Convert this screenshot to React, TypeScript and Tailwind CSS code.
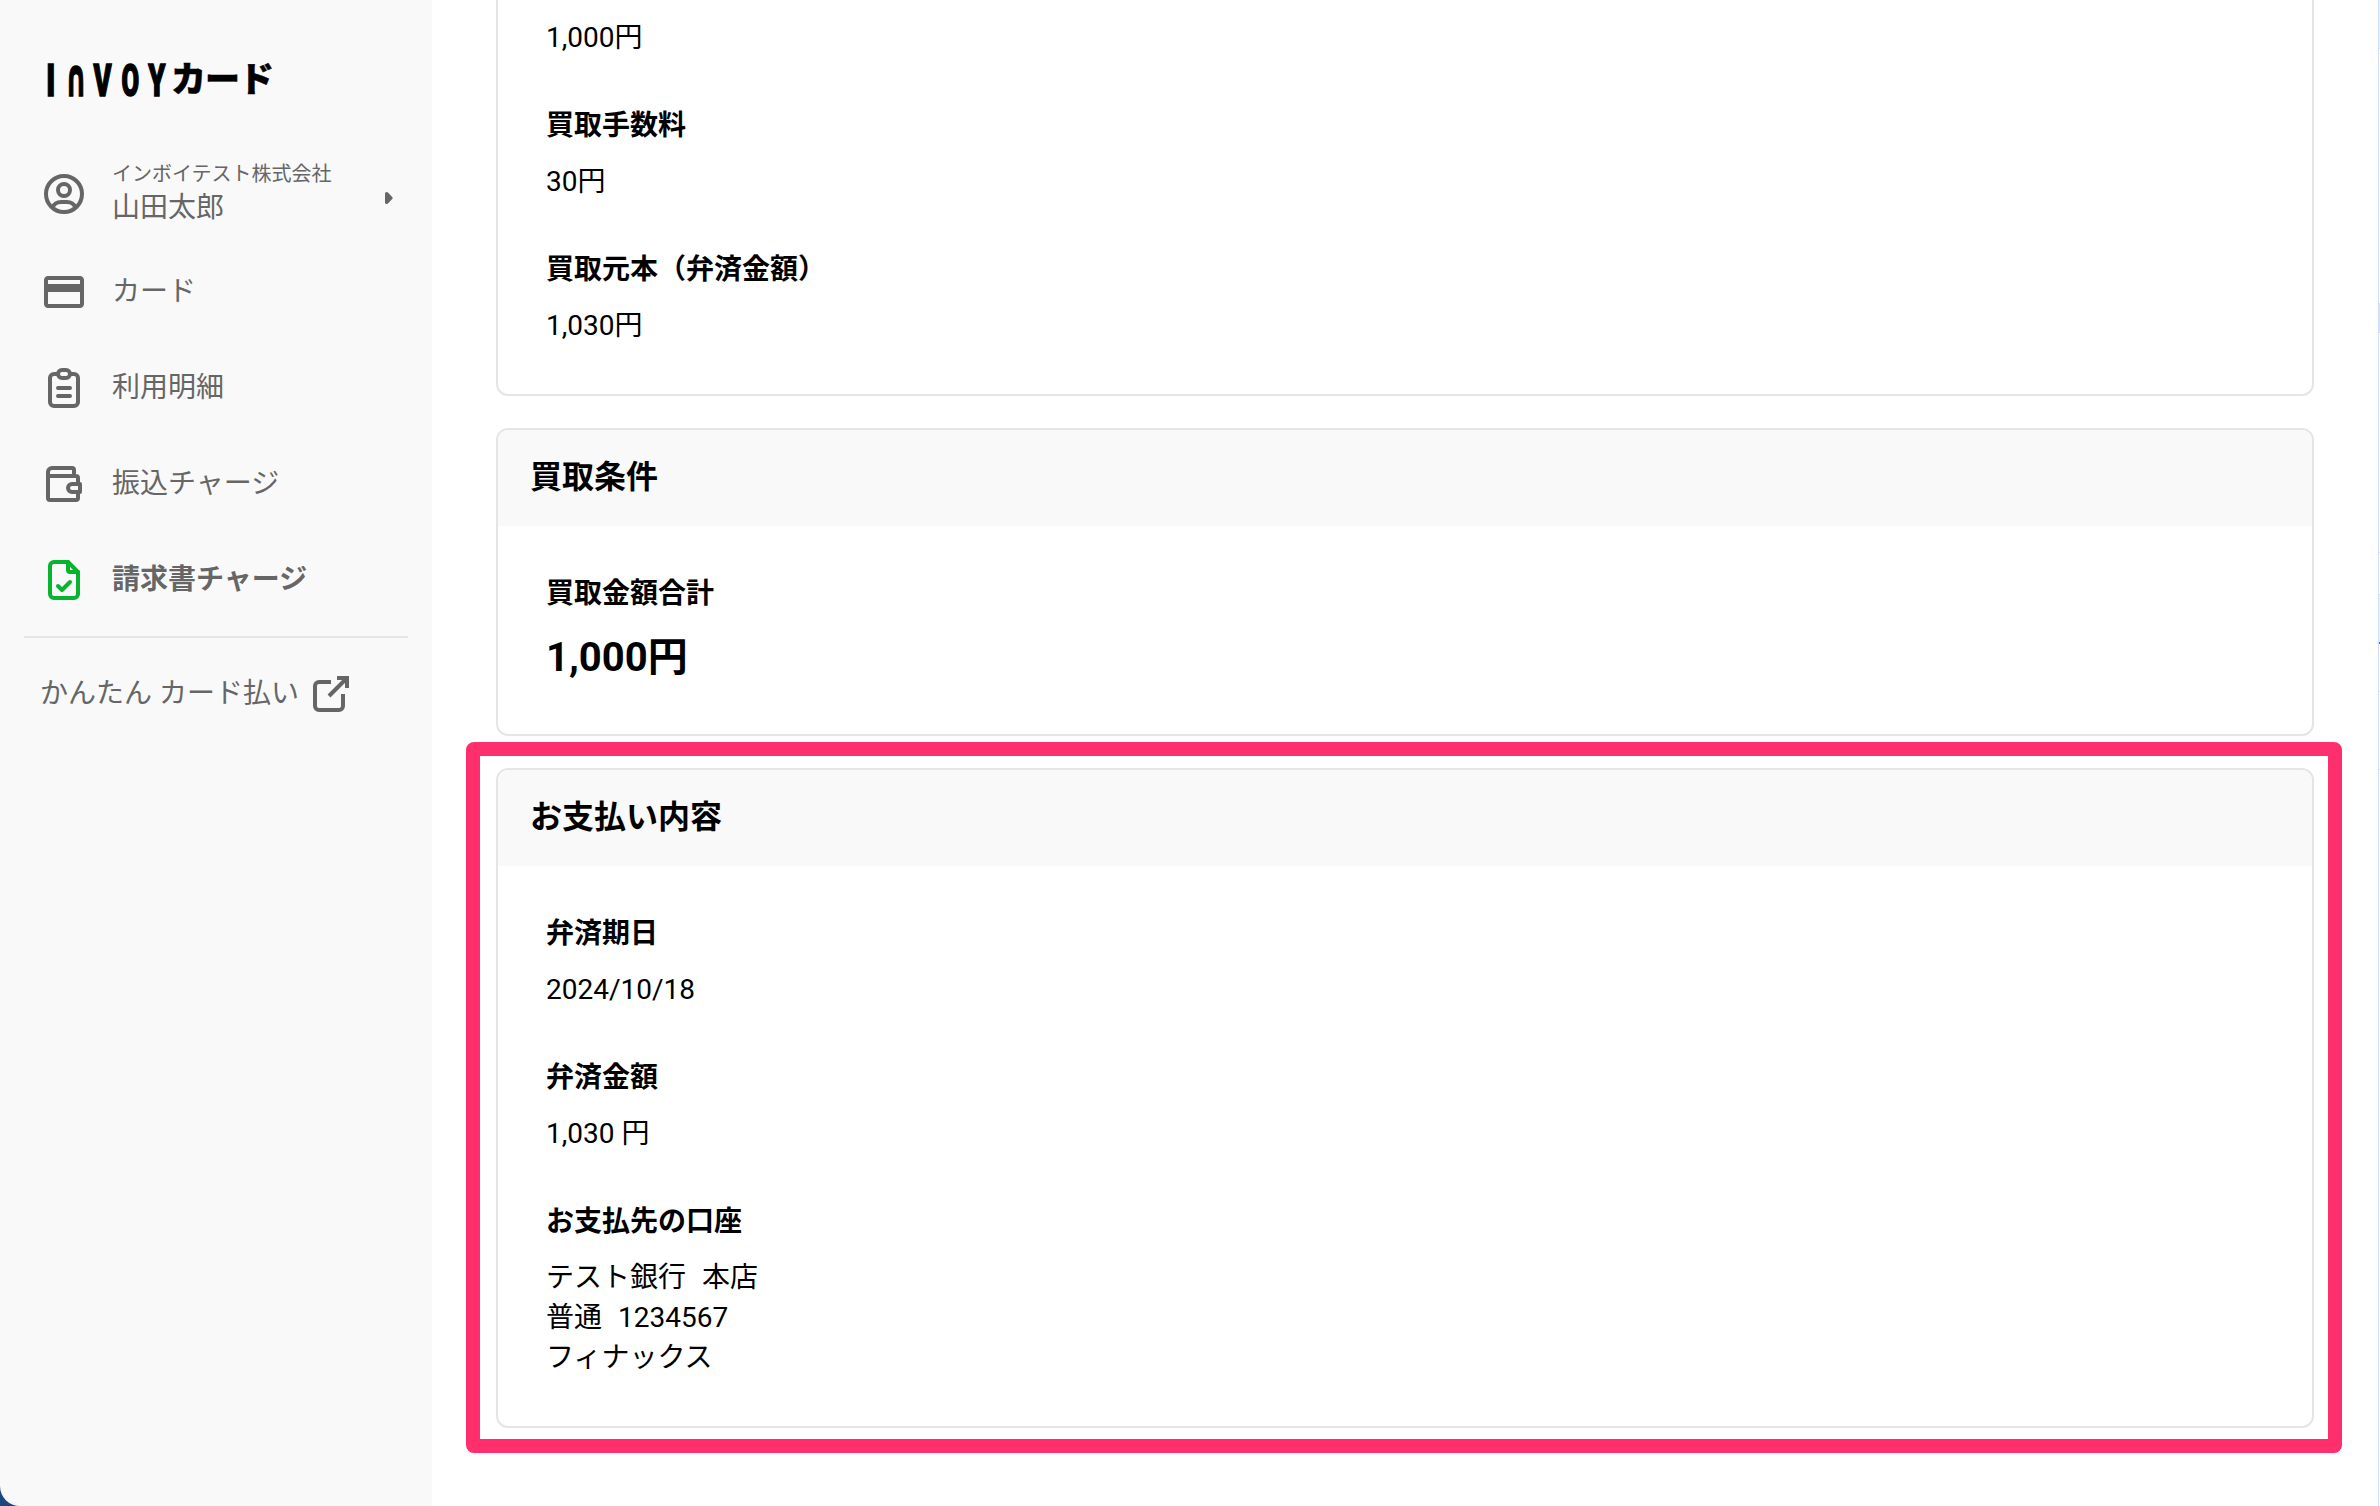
import type { ReactNode } from "react";

interface NavItemProps {
  icon: ReactNode;
  label: string;
  active?: boolean;
}

interface FieldProps {
  label: string;
  children: ReactNode;
}

interface CardProps {
  title: string;
  children: ReactNode;
}

// the wordmark is drawn with an arch in place of the N
const LOGO_LETTERS = [
  { char: "I", box: "w-[22px]", glyph: "scale-x-[0.68]" },
  { char: "∩", box: "w-[27px]", glyph: "origin-[50%_82%] scale-x-[0.6] scale-y-[1.17] font-['DejaVu_Sans'] font-bold" },
  { char: "V", box: "w-[28px]", glyph: "scale-x-[0.62]" },
  { char: "O", box: "w-[27px]", glyph: "scale-x-[0.58]" },
  { char: "Y", box: "w-[25px]", glyph: "scale-x-[0.62]" },
];

// strip of the window behind, seen along the right edge
const EDGE_SEGMENTS = [
  "h-[48px] bg-[#e6effd]",
  "h-px bg-[#cfe0fc]",
  "h-[254px] bg-white",
  "h-[30px] bg-[#cfe0fc]",
  "h-[219px] bg-white",
  "h-px bg-[#cfe0fc]",
  "h-[41px] bg-white",
  "h-px bg-[#cfe0fc]",
  "h-[47px] bg-[#eaf2fe]",
  "h-[2px] bg-[#2563eb]",
  "h-[47px] bg-white",
  "h-px bg-[#cfe0fc]",
  "h-[77px] bg-white",
  "h-px bg-[#cfe0fc]",
  "grow bg-white",
];

function Logo() {
  return (
    <div className="flex h-12 items-center pl-10 text-black">
      <div
        className="flex h-12 items-center text-[44px] leading-[48px] font-black [-webkit-text-stroke:1.5px_black]"
        aria-label="INVOY"
      >
        {LOGO_LETTERS.map(({ char, box, glyph }) => (
          <span key={char} className={`flex justify-center ${box}`}>
            <span className={`inline-block ${glyph}`}>{char}</span>
          </span>
        ))}
      </div>
      <span className="ml-[2px] text-[35px] leading-[48px] font-black tracking-[-1px] [-webkit-text-stroke:0.5px_black]">カード</span>
    </div>
  );
}

function UserIcon() {
  return (
    <svg className="size-12 shrink-0" viewBox="0 0 24 24" fill="none" stroke="currentColor" strokeWidth="2">
      <circle cx="12" cy="12" r="9" />
      <circle cx="12" cy="10" r="3" />
      <path d="M6.2 18.8C7 17 8.600 16 10.500 16h3c1.900 0 3.500 1 4.300 2.800" />
    </svg>
  );
}

function CardIcon() {
  return (
    <svg className="size-12 shrink-0" viewBox="0 0 24 24" fill="currentColor">
      <path d="M20 4H4c-1.110 0-1.990.89-1.990 2L2 18c0 1.110.89 2 2 2h16c1.110 0 2-.89 2-2V6c0-1.110-.89-2-2-2zm0 14H4v-6h16v6zm0-10H4V6h16v2z" />
    </svg>
  );
}

function ClipboardIcon() {
  return (
    <svg className="size-12 shrink-0" viewBox="0 0 24 24" fill="none" stroke="currentColor" strokeWidth="2" strokeLinecap="round">
      <path d="M9 5H7a2 2 0 0 0-2 2v12a2 2 0 0 0 2 2h10a2 2 0 0 0 2-2V7a2 2 0 0 0-2-2h-2" />
      <rect x="9" y="3" width="6" height="4" rx="2" />
      <path d="M9 12h6M9 16h6" />
    </svg>
  );
}

function WalletIcon() {
  return (
    <svg className="size-12 shrink-0" viewBox="0 0 24 24" fill="none" stroke="currentColor" strokeWidth="2" strokeLinejoin="round">
      <path d="M17 8V5a1 1 0 0 0-1-1H6a2 2 0 0 0-2 2v13a1 1 0 0 0 1 1h13a1 1 0 0 0 1-1v-3M4 8h14a1 1 0 0 1 1 1v3" />
      <path d="M20 12v4h-4a2 2 0 0 1 0-4z" />
    </svg>
  );
}

function InvoiceIcon() {
  return (
    <svg className="size-12 shrink-0 text-[#06b42e]" viewBox="0 0 24 24" fill="none" stroke="currentColor" strokeWidth="2" strokeLinecap="round" strokeLinejoin="round">
      <path d="M14 3v4a1 1 0 0 0 1 1h4" />
      <path d="M17 21H7a2 2 0 0 1-2-2V5a2 2 0 0 1 2-2h7l5 5v11a2 2 0 0 1-2 2z" />
      <path d="M9 15l2 2 4-4" />
    </svg>
  );
}

function ExternalIcon() {
  return (
    <svg className="size-12 shrink-0" viewBox="0 0 24 24" fill="none" stroke="currentColor" strokeWidth="2">
      <path d="M12 6H6a2 2 0 0 0-2 2v10a2 2 0 0 0 2 2h10a2 2 0 0 0 2-2v-6" />
      <path d="M11 13l9-9M15 4h5v5" />
    </svg>
  );
}

function NavItem({ icon, label, active = false }: NavItemProps) {
  return (
    <li className="flex h-24 items-center gap-6 pl-10">
      {icon}
      <span className={active ? "font-bold" : ""}>{label}</span>
    </li>
  );
}

function Sidebar() {
  return (
    <aside className="w-[432px] shrink-0 overflow-hidden rounded-bl-[20px] bg-[#f9f9f9] pt-[57px] text-[28px] leading-10 text-[#666]">
      <Logo />
      <div className="mt-[53px] flex h-[72px] items-center gap-6 pl-10">
        <UserIcon />
        <div className="w-[249px]">
          <div className="text-xl leading-7">インボイテスト株式会社</div>
          <div>山田太郎</div>
        </div>
        <svg className="mt-2 h-3 w-2" viewBox="0 0 8 12" fill="currentColor">
          <path d="M0 1.500Q0 0 1.500 0Q2.500 0 3.200 .7L7.400 5.200Q8 6 7.400 6.800L3.200 11.300Q2.500 12 1.500 12Q0 12 0 10.500z" />
        </svg>
      </div>
      <ul className="mt-[14px]">
        <NavItem icon={<CardIcon />} label="カード" />
        <NavItem icon={<ClipboardIcon />} label="利用明細" />
        <NavItem icon={<WalletIcon />} label="振込チャージ" />
        <NavItem icon={<InvoiceIcon />} label="請求書チャージ" active />
      </ul>
      <hr className="mx-6 mt-2 border-t-2 border-[#e5e5e5]" />
      <div className="mt-8 flex items-center gap-2 pl-10">
        <span>かんたん カード払い</span>
        <ExternalIcon />
      </div>
    </aside>
  );
}

function Field({ label, children }: FieldProps) {
  return (
    <div className="flex flex-col gap-4">
      <dt className="font-bold">{label}</dt>
      <dd>{children}</dd>
    </div>
  );
}

function Card({ title, children }: CardProps) {
  return (
    <section className="overflow-hidden rounded-xl border-2 border-[#e5e5e5]">
      <h2 className="flex h-24 items-center bg-[#f9f9f9] px-8 pb-0.5 text-[32px] font-bold">{title}</h2>
      <dl className="flex flex-col gap-12 p-12">{children}</dl>
    </section>
  );
}

export default function App() {
  return (
    <div
      className="relative flex h-[1506px] w-[2380px] overflow-hidden bg-white font-[Roboto,'Noto_Sans_CJK_JP',sans-serif] text-[28px] leading-10 text-black"
      lang="ja"
    >
      <div className="flex bg-[#1d4580]">
        <Sidebar />
      </div>
      <main className="flex w-[1946px] flex-col gap-8 pr-16 pl-16">
        <section className="rounded-b-xl border-2 border-t-0 border-[#e5e5e5]">
          <dl className="flex flex-col gap-12 px-12 pt-[18px] pb-12">
            <dd>1,000円</dd>
            <Field label="買取手数料">30円</Field>
            <Field label="買取元本（弁済金額）">1,030円</Field>
          </dl>
        </section>
        <Card title="買取条件">
          <Field label="買取金額合計">
            <span className="block text-[40px] leading-[56px] font-bold">1,000円</span>
          </Field>
        </Card>
        <Card title="お支払い内容">
          <Field label="弁済期日">2024/10/18</Field>
          <Field label="弁済金額">1,030 円</Field>
          <Field label="お支払先の口座">
            <div className="flex gap-4">
              <span>テスト銀行</span>
              <span>本店</span>
            </div>
            <div className="flex gap-4">
              <span>普通</span>
              <span>1234567</span>
            </div>
            <div>フィナックス</div>
          </Field>
        </Card>
      </main>
      <div className="w-px bg-[#cfe0fc]" />
      <div className="flex w-px flex-col">
        {EDGE_SEGMENTS.map((segment, i) => (
          <div key={i} className={segment} />
        ))}
      </div>
      {/* highlight around the payment card */}
      <div className="absolute top-[742px] left-[466px] h-[711px] w-[1876px] rounded-lg border-[14px] border-[#ff2e6c]" />
    </div>
  );
}
